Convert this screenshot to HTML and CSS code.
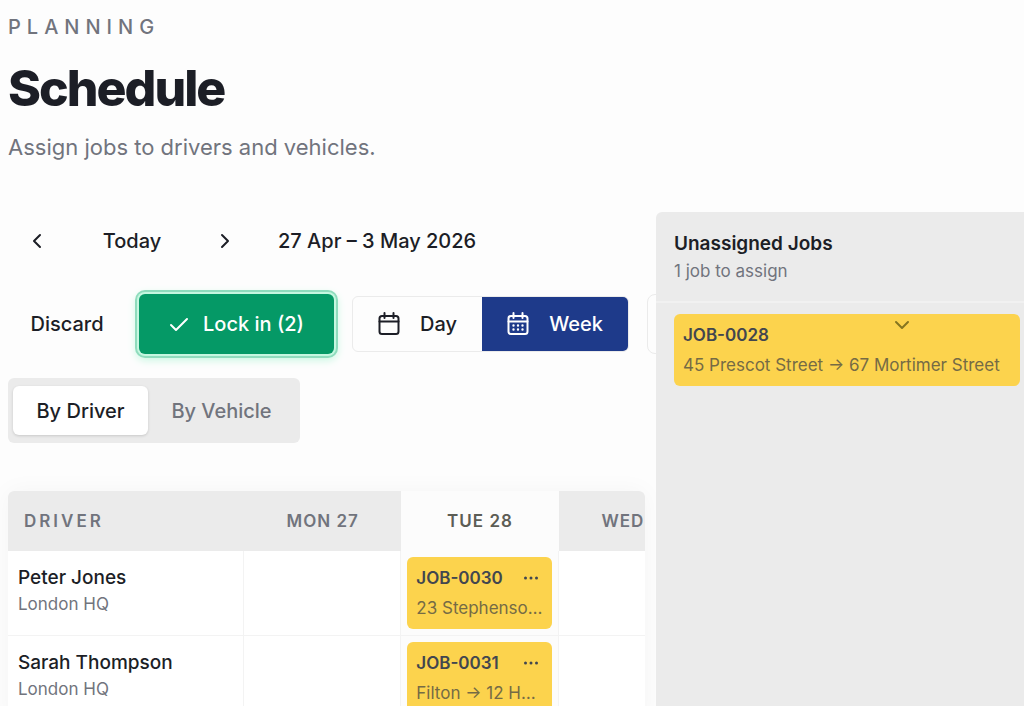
FILE: index.html
```html
<!DOCTYPE html>
<html lang="en">
<head>
  <meta charset="UTF-8">
  <meta name="viewport" content="width=device-width, initial-scale=1.0">
  <title>Schedule</title>
  <link rel="stylesheet" href="styles.css">
</head>
<body>

  <header class="page-header">
    <p class="eyebrow">Planning</p>
    <h1>Schedule</h1>
    <p class="subtitle">Assign jobs to drivers and vehicles.</p>
  </header>

  <main class="layout">
    <section class="planner">
      <div class="date-nav">
        <button class="nav-btn" type="button" aria-label="Previous week">
          <svg width="20" height="20" viewBox="0 0 20 20"><path d="M12 4 L6 10 L12 16"/></svg>
        </button>
        <button class="today-btn" type="button">Today</button>
        <button class="nav-btn" type="button" aria-label="Next week">
          <svg width="20" height="20" viewBox="0 0 20 20"><path d="M6 4 L12 10 L6 16"/></svg>
        </button>
        <span class="date-range">27 Apr – 3 May 2026</span>
      </div>

      <div class="actions">
        <button class="discard-btn" type="button">Discard</button>
        <button class="lock-btn" type="button">
          <svg width="20" height="20" viewBox="0 0 20 20"><path d="M2 11 L7 16 L18 5"/></svg>
          Lock in (2)
        </button>
        <div class="view-switch">
          <button class="view-btn" type="button">
            <svg width="22" height="24" viewBox="0 0 22 24">
              <rect x="1.5" y="4" width="19" height="18" rx="2.5"/>
              <path d="M1.5 9.5 H20.5 M6.5 1 V6 M15.5 1 V6"/>
            </svg>
            Day
          </button>
          <button class="view-btn active" type="button">
            <svg width="22" height="24" viewBox="0 0 22 24">
              <rect x="1.5" y="4" width="19" height="18" rx="2.5"/>
              <path d="M1.5 9.5 H20.5 M6.5 1 V6 M15.5 1 V6"/>
              <path class="dots" d="M6.5 13.5 h.01 M11 13.5 h.01 M15.5 13.5 h.01 M6.5 17.5 h.01 M11 17.5 h.01 M15.5 17.5 h.01"/>
            </svg>
            Week
          </button>
        </div>
        <button class="more-btn" type="button" aria-label="More"></button>
      </div>

      <div class="group-switch">
        <button class="group-btn active" type="button">By Driver</button>
        <button class="group-btn" type="button">By Vehicle</button>
      </div>

      <div class="table-wrap">
        <table class="schedule">
          <colgroup>
            <col class="col-driver">
            <col class="col-day">
            <col class="col-day">
            <col class="col-day">
          </colgroup>
          <thead>
            <tr>
              <th class="driver-head" scope="col">Driver</th>
              <th scope="col">Mon 27</th>
              <th class="today" scope="col">Tue 28</th>
              <th scope="col">Wed 29</th>
            </tr>
          </thead>
          <tbody>
            <tr>
              <td class="driver">
                <div class="driver-name">Peter Jones</div>
                <div class="driver-base">London HQ</div>
              </td>
              <td></td>
              <td class="today">
                <div class="job">
                  <div class="job-top">
                    <span class="job-id">JOB-0030</span>
                    <button class="job-menu" type="button" aria-label="Job menu">
                      <svg width="16" height="6" viewBox="0 0 16 6"><circle cx="2.5" cy="3" r="1.5"/><circle cx="8" cy="3" r="1.5"/><circle cx="13.5" cy="3" r="1.5"/></svg>
                    </button>
                  </div>
                  <div class="job-route">23 Stephenson Way</div>
                </div>
              </td>
              <td></td>
            </tr>
            <tr>
              <td class="driver">
                <div class="driver-name">Sarah Thompson</div>
                <div class="driver-base">London HQ</div>
              </td>
              <td></td>
              <td class="today">
                <div class="job">
                  <div class="job-top">
                    <span class="job-id">JOB-0031</span>
                    <button class="job-menu" type="button" aria-label="Job menu">
                      <svg width="16" height="6" viewBox="0 0 16 6"><circle cx="2.5" cy="3" r="1.5"/><circle cx="8" cy="3" r="1.5"/><circle cx="13.5" cy="3" r="1.5"/></svg>
                    </button>
                  </div>
                  <div class="job-route">Filton → 12 Hotwell Road</div>
                </div>
              </td>
              <td></td>
            </tr>
          </tbody>
        </table>
      </div>
    </section>

    <aside class="unassigned">
      <div class="unassigned-header">
        <h2>Unassigned Jobs</h2>
        <p>1 job to assign</p>
      </div>
      <div class="unassigned-list">
        <div class="job">
          <div class="job-top"><span class="job-id">JOB-0028</span></div>
          <div class="job-route">45 Prescot Street → 67 Mortimer Street</div>
          <button class="job-expand" type="button" aria-label="Expand">
            <svg width="16" height="10" viewBox="0 0 16 10"><path d="M2 2 L8 8 L14 2"/></svg>
          </button>
        </div>
      </div>
    </aside>
  </main>

</body>
</html>
```
FILE: styles.css
```css
* {
  box-sizing: border-box;
}

body {
  margin: 0;
  padding: 16px 0 0 8px;
  height: 100vh;
  overflow: hidden;
  display: flex;
  flex-direction: column;
  background: #fdfdfd;
  color: #1c1e26;
  font-family: Inter, "Liberation Sans", sans-serif;
  font-size: 20px;
}

h1, h2, p {
  margin: 0;
}

button {
  margin: 0;
  padding: 0;
  border: none;
  background: none;
  color: inherit;
  font: inherit;
  font-weight: 500;
  cursor: pointer;
}

svg {
  display: block;
  fill: none;
  stroke: currentColor;
  stroke-width: 2;
  stroke-linecap: round;
  stroke-linejoin: round;
}

.eyebrow {
  color: #71747d;
  font-size: 20px;
  font-weight: 500;
  line-height: 22px;
  letter-spacing: 6px;
  text-transform: uppercase;
}

h1 {
  margin-top: 20px;
  font-size: 50px;
  font-weight: 800;
  line-height: 60px;
  letter-spacing: -2px;
}

.subtitle {
  margin-top: 14px;
  color: #71747d;
  font-size: 22px;
  line-height: 30px;
}

.layout {
  flex: 1;
  min-height: 0;
  margin-top: 50px;
  display: flex;
  gap: 11px;
}

.planner {
  flex: 1;
  min-width: 0;
}

/* Date navigation */
.date-nav {
  display: flex;
  align-items: center;
  height: 58px;
  padding-left: 20px;
}

.date-range {
  margin-left: 42px;
  font-weight: 500;
  white-space: nowrap;
}

.today-btn {
  width: 168px;
}

/* Action bar */
.actions {
  display: flex;
  align-items: center;
  height: 60px;
  margin-top: 24px;
}

.actions button {
  flex-shrink: 0;
}

.discard-btn {
  width: 118px;
}

.lock-btn {
  display: flex;
  align-items: center;
  justify-content: center;
  gap: 14px;
  width: 195px;
  height: 60px;
  margin-left: 13px;
  border-radius: 6px;
  background: #059966;
  color: #fff;
  box-shadow: 0 0 0 2px #c5f7e0, 0 0 0 4px #8fdcbd, 0 3px 8px 3px #c5f7e0;
}

.view-switch {
  display: flex;
  flex-shrink: 0;
  height: 56px;
  margin-left: 18px;
  border: 1px solid #ebebeb;
  border-radius: 6px;
  overflow: hidden;
}

.view-btn {
  display: flex;
  align-items: center;
  justify-content: center;
  gap: 20px;
  width: 129px;
}

.view-btn.active {
  width: 146px;
  background: #1e3a8a;
  color: #fff;
}

.view-btn .dots {
  stroke-width: 2.4;
}

.more-btn {
  width: 140px;
  height: 60px;
  margin-left: 18px;
  border: 1px solid #ebebeb;
  border-radius: 8px;
}

/* Driver / vehicle switch */
.group-switch {
  display: inline-flex;
  height: 65px;
  margin-top: 24px;
  padding: 8px 5px;
  border-radius: 6px;
  background: #ebebeb;
}

.group-btn {
  width: 147px;
  border-radius: 6px;
  color: #71747d;
}

.group-btn.active {
  width: 135px;
  background: #fff;
  color: #1c1e26;
  box-shadow: 0 1px 3px rgba(0, 0, 0, 0.15);
}

/* Schedule table */
.table-wrap {
  margin-top: 48px;
  border-radius: 6px;
  overflow: hidden;
  box-shadow: 0 0 24px rgba(0, 0, 0, 0.04);
}

.schedule {
  width: 708px;
  border-collapse: separate;
  border-spacing: 0;
  table-layout: fixed;
  background: #fff;
}

.col-driver {
  width: 236px;
}

.schedule th {
  height: 60px;
  padding: 0;
  background: #ebebeb;
  color: #71747d;
  font-size: 17px;
  font-weight: 600;
  letter-spacing: 1px;
  text-transform: uppercase;
}

.schedule .driver-head {
  padding-left: 16px;
  letter-spacing: 3px;
  text-align: left;
}

.schedule th.today {
  background: #fcfcfc;
  color: #5c5d55;
}

.schedule td {
  height: 84px;
  padding: 6px;
  border-right: 1px solid #f3f3f3;
  border-bottom: 1px solid #f3f3f3;
  vertical-align: top;
}

.schedule td.today {
  background: #fcfcfc;
}

.schedule td.driver {
  padding: 14px 10px;
}

.driver-name {
  font-size: 19px;
  font-weight: 500;
  line-height: 26px;
}

.driver-base {
  color: #71747d;
  font-size: 17px;
  line-height: 26px;
}

/* Job cards */
.job {
  position: relative;
  padding: 6px 9px;
  border-radius: 6px;
  background: #fcd34d;
  line-height: 30px;
}

.job-top {
  display: flex;
  align-items: center;
  justify-content: space-between;
}

.job-id {
  color: #42464f;
  font-size: 17px;
  font-weight: 600;
}

.job-menu {
  margin-right: 4px;
  color: #42464f;
}

.job-menu svg {
  fill: currentColor;
  stroke: none;
}

.job-route {
  color: #756b45;
  font-size: 17px;
  overflow: hidden;
  text-overflow: ellipsis;
  white-space: nowrap;
}

.job-expand {
  position: absolute;
  top: 6px;
  right: 110px;
  color: #857520;
}

/* Unassigned jobs */
.unassigned {
  position: relative;
  z-index: 1;
  flex: 0 0 368px;
  border-radius: 6px 0 0 0;
  background: #ebebeb;
}

.unassigned-header {
  padding: 19px 18px 16px;
  border-bottom: 2px solid #f1f1f1;
}

.unassigned-header h2 {
  font-size: 19px;
  font-weight: 600;
  line-height: 26px;
}

.unassigned-header p {
  color: #71747d;
  font-size: 17px;
  line-height: 28px;
}

.unassigned-list {
  padding: 11px 4px 11px 18px;
}
```
